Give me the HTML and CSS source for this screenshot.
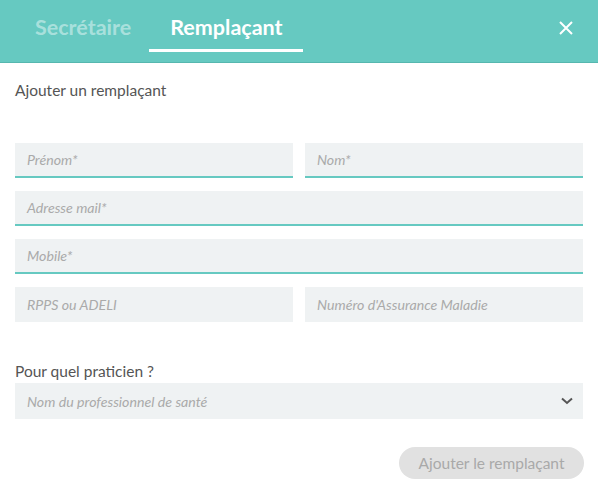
FILE: index.html
```html
<!DOCTYPE html>
<html lang="fr">
<head>
<meta charset="utf-8">
<link rel="stylesheet" href="styles.css">
</head>
<body>
<div class="modal">
  <header class="head">
    <nav class="tabs">
      <div class="tab">Secrétaire</div>
      <div class="tab active">Remplaçant</div>
    </nav>
    <button class="close" aria-label="Fermer">
      <svg width="14" height="14" viewBox="0 0 14 14"><path d="M1 1L13 13M13 1L1 13" stroke="#fff" stroke-width="2" fill="none"/></svg>
    </button>
  </header>
  <main class="body">
    <h2 class="title">Ajouter un remplaçant</h2>
    <div class="grid">
      <div class="field req">Prénom*</div>
      <div class="field req">Nom*</div>
      <div class="field req wide">Adresse mail*</div>
      <div class="field req wide">Mobile*</div>
      <div class="field">RPPS ou ADELI</div>
      <div class="field">Numéro d'Assurance Maladie</div>
    </div>
    <div class="label">Pour quel praticien ?</div>
    <div class="field select">
      <span>Nom du professionnel de santé</span>
      <svg width="12" height="8" viewBox="0 0 12 8"><path d="M1 1.5L6 6L11 1.5" stroke="#555" stroke-width="2" fill="none"/></svg>
    </div>
    <div class="actions">
      <button class="submit">Ajouter le remplaçant</button>
    </div>
  </main>
</div>
</body>
</html>
```
FILE: styles.css
```css
* { box-sizing: border-box; }
html, body { margin: 0; padding: 0; background: #fff; }
body { font-family: "Lato", "Open Sans", sans-serif; color: #555; width: 598px; height: 494px; overflow: hidden; }
.head {
  height: 63px;
  background: #66c9c1;
  border-bottom: 1px solid #56b7af;
  display: flex;
  align-items: flex-start;
  justify-content: space-between;
  padding: 0 15px 0 15px;
}
.tabs { display: flex; height: 52px; align-items: stretch; }
.tab {
  font-size: 21.5px;
  font-weight: 700;
  color: rgba(255,255,255,0.45);
  padding: 14px 20px 0;
  height: 52px;
}
.tab:first-child { padding-left: 20px; padding-right: 18px; }
.tab.active { color: #fff; border-bottom: 3px solid #fff; padding-left: 21px; }
.close {
  margin-top: 21px;
  background: none;
  border: 0;
  padding: 0 10px 0 0;
  cursor: pointer;
  display: flex;
}
.body { padding: 0 15px; }
.title {
  margin: 0;
  font-size: 15.5px;
  font-weight: 400;
  color: #555;
  padding-top: 18px;
  height: 80px;
}
.grid {
  display: grid;
  grid-template-columns: 1fr 1fr;
  column-gap: 12px;
  row-gap: 13px;
}
.field {
  height: 35px;
  background: #eff2f3;
  font-size: 14.2px;
  font-style: italic;
  color: #aaa;
  padding: 0 12px;
  display: flex;
  align-items: center;
}
.field.req { border-bottom: 2px solid #66c9c1; }
.field.wide { grid-column: 1 / span 2; }
.label {
  margin-top: 39px;
  font-size: 15.5px;
  color: #555;
  height: 22px;
  line-height: 21px;
}
.select { justify-content: space-between; padding-right: 10px; height: 36px; }
.actions { display: flex; justify-content: flex-end; margin-top: 28px; }
.submit {
  font-family: inherit;
  font-size: 15.5px;
  color: #a9a9a9;
  background: #e1e1e1;
  border: 0;
  border-radius: 16px;
  height: 32px;
  width: 185px;
  padding: 0;
  margin-right: -1px;
}
```
